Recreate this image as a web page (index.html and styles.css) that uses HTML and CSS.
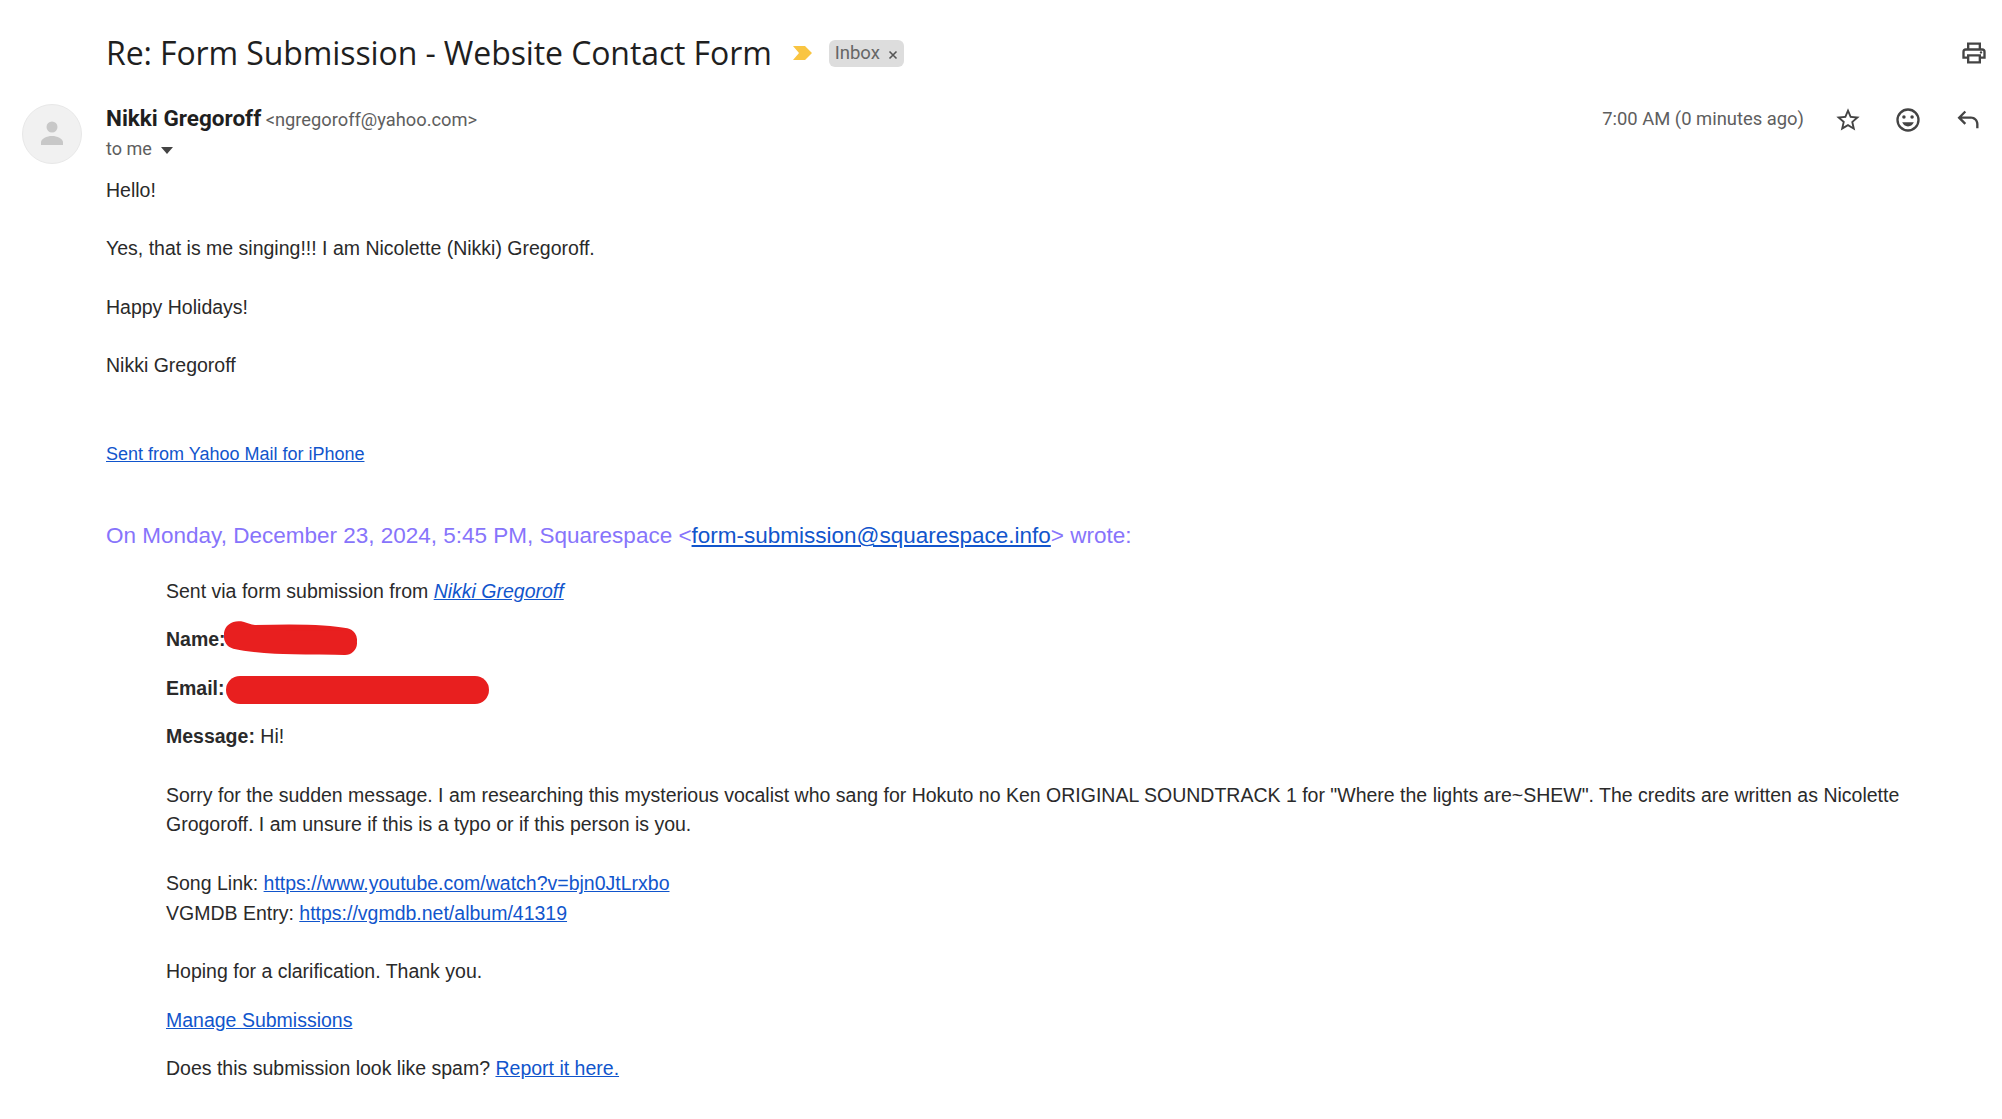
FILE: index.html
```html
<!DOCTYPE html>
<html lang="en">
<head>
<meta charset="utf-8">
<title>Re: Form Submission - Website Contact Form</title>
<link rel="stylesheet" href="styles.css">
</head>
<body>
<main class="mail">
  <header class="subject-row">
    <h1 class="subject">Re: Form Submission - Website Contact Form</h1>
    <svg class="marker" viewBox="0 0 20 14"><path d="M0 0h12l7 7-7 7H0l6-7z"/></svg>
    <span class="label">Inbox <svg class="label-x" viewBox="0 0 10 10"><path d="M1.5 1.5l7 7M8.500 1.500l-7 7"/></svg></span>
    <svg class="print" viewBox="0 0 24 24"><path d="M19 8h-1V3H6v5H5a3 3 0 0 0-3 3v6h4v4h12v-4h4v-6a3 3 0 0 0-3-3zM8 5h8v3H8V5zm8 14H8v-4h8v4zm2-4v-2H6v2H4v-4a1 1 0 0 1 1-1h14a1 1 0 0 1 1 1v4h-2z"/><circle cx="18" cy="11.500" r="1"/></svg>
  </header>
  <section class="message">
    <div class="avatar"><svg viewBox="0 0 24 26"><circle cx="12" cy="6" r="5.500"/><path d="M1 24v-2.500C1 17.500 7 15 12 15s11 2.500 11 6.500V24z"/></svg></div>
    <div class="content">
      <div class="meta">
        <div class="sender">
          <div class="from"><span class="name">Nikki Gregoroff</span> <span class="addr">&lt;ngregoroff@yahoo.com&gt;</span></div>
          <div class="to">to me <span class="caret"></span></div>
        </div>
        <div class="actions">
          <span class="time">7:00 AM (0 minutes ago)</span>
          <svg class="icon" viewBox="0 0 24 24"><path d="M22 9.240l-7.190-.620L12 2 9.190 8.630 2 9.240l5.460 4.730L5.820 21 12 17.270 18.180 21l-1.630-7.030L22 9.240zM12 15.400l-3.760 2.270 1-4.280-3.320-2.880 4.380-.380L12 6.100l1.710 4.040 4.380.380-3.320 2.880 1 4.280L12 15.400z"/></svg>
          <svg class="icon" viewBox="0 0 24 24"><path d="M12 2a10 10 0 1 0 0 20 10 10 0 0 0 0-20zm0 18a8 8 0 1 1 0-16 8 8 0 0 1 0 16z"/><circle cx="8.500" cy="9.500" r="1.500"/><circle cx="15.500" cy="9.500" r="1.500"/><path d="M12 17.500c2.300 0 4.300-1.500 5-3.500H7c.7 2 2.700 3.500 5 3.500z"/></svg>
          <svg class="icon" viewBox="0 0 24 24"><path d="M21 19h-2v-3.500c0-2.500-2-4.500-4.500-4.500H6.800l3.600 3.600L9 16l-6-6 6-6 1.400 1.400L6.800 9h7.700c3.600 0 6.500 2.900 6.500 6.500V19z"/></svg>
        </div>
      </div>
      <div class="body">
        <p>Hello!</p>
        <p>Yes, that is me singing!!! I am Nicolette (Nikki) Gregoroff.</p>
        <p>Happy Holidays!</p>
        <p>Nikki Gregoroff</p>
        <p class="sig"><a href="#">Sent from Yahoo Mail for iPhone</a></p>
        <p class="quote-head">On Monday, December 23, 2024, 5:45 PM, Squarespace &lt;<a href="#">form-submission@squarespace.info</a>&gt; wrote:</p>
        <blockquote class="quote">
          <p class="tight">Sent via form submission from <a href="#"><em>Nikki Gregoroff</em></a></p>
          <p class="tight redact-row"><b>Name:</b><svg class="scribble scribble-name" viewBox="0 0 136 36"><path d="M15 14c4-3 9 3 19 3 30-1 70-1 90 3" fill="none" stroke-linecap="round" stroke-width="24"/><path d="M15 17c30 7 80 5 109 6" fill="none" stroke-linecap="round" stroke-width="24"/></svg></p>
          <p class="tight redact-row"><b>Email:</b><span class="scribble-email"></span></p>
          <p><b>Message:</b> Hi!</p>
          <p class="para-wide">Sorry for the sudden message. I am researching this mysterious vocalist who sang for Hokuto no Ken ORIGINAL SOUNDTRACK 1 for "Where the lights are~SHEW". The credits are written as Nicolette Grogoroff. I am unsure if this is a typo or if this person is you.</p>
          <p>Song Link: <a href="#">https://www.youtube.com/watch?v=bjn0JtLrxbo</a><br>VGMDB Entry: <a href="#">https://vgmdb.net/album/41319</a></p>
          <p class="tight">Hoping for a clarification. Thank you.</p>
          <p class="tight"><a href="#">Manage Submissions</a></p>
          <p class="tight">Does this submission look like spam? <a href="#">Report it here.</a></p>
        </blockquote>
      </div>
    </div>
  </section>
</main>
</body>
</html>
```
FILE: styles.css
```css
* { box-sizing: border-box; }
html, body { margin: 0; height: 100%; background: #fff; overflow: hidden; }
body { font-family: "Liberation Sans", Arial, sans-serif; color: #222; }
.mail { padding: 28px 14px 0 22px; }
.subject-row { display: flex; align-items: center; height: 50px; padding-left: 84px; }
.subject { margin: 0; font: 400 32px/50px "Open Sans", sans-serif; color: #1f1f1f; letter-spacing: -0.1px; }
.marker { width: 20px; height: 14px; margin-left: 21px; fill: #f9c542; }
.label { display: inline-flex; align-items: center; gap: 8px; height: 27px; margin-left: 16px; padding: 0 6px; border-radius: 6px; background: #ddd; color: #666; font: 400 18.500px/27px Roboto, sans-serif; }
.label-x { width: 10px; height: 10px; stroke: #555; stroke-width: 1.600; fill: none; margin-top: 3px; }
.print { width: 28px; height: 28px; margin-left: auto; fill: #444; margin-right: 0; }
.message { display: flex; gap: 24px; margin-top: 26px; }
.avatar { flex: none; width: 60px; height: 60px; border-radius: 50%; background: #f1f1f1; border: 1px solid #e8e8e8; display: flex; align-items: center; justify-content: center; }
.avatar svg { width: 24px; height: 26px; fill: #c8c8c8; }
.content { flex: 1; min-width: 0; }
.meta { display: flex; justify-content: space-between; align-items: flex-start; }
.from { line-height: 28px; }
.name { font: 700 22.500px/28px Roboto, sans-serif; color: #1f1f1f; }
.addr { font: 400 18.300px/28px Roboto, sans-serif; color: #5e5e5e; }
.to { font: 400 18px/28px Roboto, sans-serif; color: #5e5e5e; }
.caret { display: inline-block; width: 0; height: 0; margin-left: 5px; border: 6px solid transparent; border-top: 7px solid #444; border-bottom: 0; vertical-align: middle; }
.actions { display: flex; align-items: center; height: 30px; padding-top: 2px; padding-right: 6px; }
.time { font: 400 18.400px/28px Roboto, sans-serif; color: #5e5e5e; margin-right: 30px; margin-top: -2px; }
.icon { width: 28px; height: 28px; fill: #444; margin-left: 32px; }
.time + .icon { margin-left: 0; }
.body { margin-top: 13px; font-size: 19.500px; line-height: 29.400px; color: #2a2a2a; }
.body p { margin: 0 0 29px; }
.body a { color: #1155cc; }
.body .sig { font-size: 18px; margin: 59px 0 0; }
.body .quote-head { font-size: 22.500px; color: #8774fb; margin: 52px 0 0; line-height: 30px; }
.quote { margin: 26px 0 0 60px; }
.body .tight { margin-bottom: 19px; }
.body .para-wide { margin-bottom: 30px; }
.redact-row { position: relative; }
.scribble { position: absolute; left: 55px; top: -5px; width: 136px; height: 36px; stroke: #e81f1f; }
.scribble-email { position: absolute; left: 60px; top: 2px; width: 263px; height: 28px; border-radius: 14px; background: #e81f1f; }
```
